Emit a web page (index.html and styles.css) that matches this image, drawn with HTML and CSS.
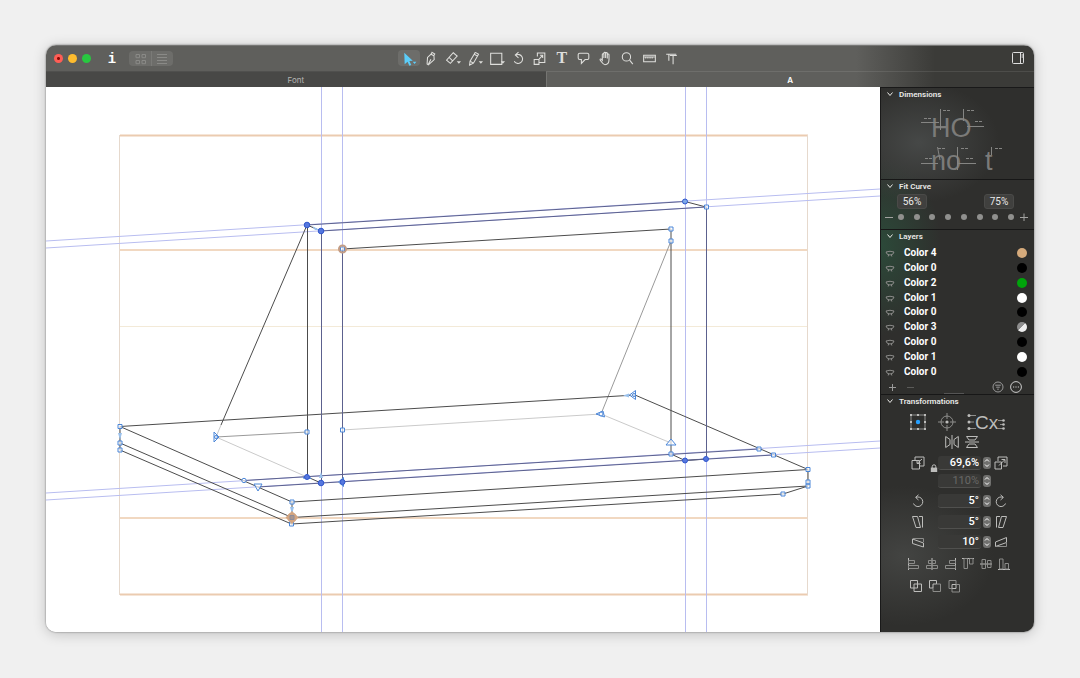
FILE: index.html
```html
<!DOCTYPE html>
<html lang="en">
<head>
<meta charset="utf-8">
<title>Glyph Editor</title>
<link rel="stylesheet" href="styles.css">
</head>
<body>
<svg class="defs" aria-hidden="true">
  <defs>
    <symbol id="eye" viewBox="0 0 10 8"><path d="M1 3Q5 1.500 9 3M1 3Q1.500 6 5 6Q8.500 6 9 3M3.600 6L3.200 7.500M6.400 6L6.800 7.500"/></symbol>
    <symbol id="chev" viewBox="0 0 8 8"><path d="M1.500 2.500L4 5.500L6.500 2.500"/></symbol>
    <symbol id="updown" viewBox="0 0 8 12"><path d="M2 4.500L4 2.500L6 4.500M2 7.500L4 9.500L6 7.500"/></symbol>
    <symbol id="rotate" viewBox="0 0 14 14"><path d="M2.500 9.500A4.800 4.800 0 1 0 5 3.400M7.500 .800L4.600 3.400L7.500 6"/></symbol>
  </defs>
</svg>
<main class="window">
  <header class="titlebar">
    <div class="left">
      <div class="lights"><button class="light red" aria-label="Close"></button><button class="light yellow" aria-label="Minimize"></button><button class="light green" aria-label="Zoom"></button></div>
      <button class="info" aria-label="Info">i</button>
      <div class="views">
        <button aria-label="Grid view"><svg viewBox="0 0 12 12"><path d="M1 1.500h3.500v3.200H1zM7 1.500h3.500v3.200H7zM1 7.500h3.500v3.200H1zM7 7.500h3.500v3.200H7z"/></svg></button>
        <button aria-label="List view"><svg viewBox="0 0 12 12"><path d="M1 1.500h10M1 4.500h10M1 7.500h10M1 10.500h10"/></svg></button>
      </div>
    </div>
    <nav class="tools" aria-label="Tools">
      <button class="active" aria-label="Select"><svg viewBox="1 1 16 16"><path class="fill" d="M5 3.500L13 11L9.800 11.300L11.600 15L9.800 15.800L8.100 12L5.400 14.400zM13 12h3.400l-1.700 2.200z"/></svg></button>
      <button aria-label="Draw"><svg viewBox="1 1 16 16"><path d="M10.500 3.200L13 4.800L12.200 6.200L12.500 10L7 15L5.800 14.200L6.200 8L9.500 5zM9.500 5L12.200 6.400M7 14.400L9.400 9.800"/></svg></button>
      <button aria-label="Erase"><svg viewBox="1 1 16 16"><path d="M9.700 3.600L13.400 6.700L7 13.600L3.400 10.500zM5.800 8L9.400 11.400"/><path class="fill" d="M13 11.500h4l-2 2.400z"/></svg></button>
      <button aria-label="Pencil"><svg viewBox="1 1 16 16"><path d="M9.800 3.200L12.800 5L8 13.400L4.400 15.200L4.800 11.500L9.800 3.200M8.800 5L11.800 6.800M4.800 11.500L8 13.400"/><path class="fill" d="M13 11.500h4l-2 2.400z"/></svg></button>
      <button aria-label="Rectangle"><svg viewBox="1 1 16 16"><path d="M3.500 4h10.500v10.500h-10.500z"/><path class="fill" d="M13 11.500h4l-2 2.400z"/></svg></button>
      <button aria-label="Rotate"><svg viewBox="1 1 16 16"><path d="M5 11.500A4.200 4.200 0 1 0 6.500 5.800M9 3L6 5.800L9 8.400"/></svg></button>
      <button aria-label="Scale"><svg viewBox="1 1 16 16"><path d="M7 7V3.800h7v9H9M4 10h4.500v4.500H4zM8.500 9.500L12 6M9.500 6H12v2.600"/></svg></button>
      <button aria-label="Text" class="serif">T</button>
      <button aria-label="Annotation"><svg viewBox="1 1 16 16"><path d="M5.500 4h7a1.500 1.500 0 0 1 1.500 1.500v3a1.500 1.500 0 0 1-1.500 1.500h-2L7 13.600V10H5.500A1.500 1.500 0 0 1 4 8.500v-3A1.500 1.500 0 0 1 5.500 4z"/></svg></button>
      <button aria-label="Hand"><svg viewBox="1 1 16 16"><path d="M6 10V5.200c0-1 1.500-1 1.500 0V8.500V4c0-1 1.600-1 1.600 0V8.500V4.200c0-1 1.600-1 1.600 0V9V5.500c0-1 1.600-1 1.600 0V10c0 3-1.400 4.800-3.800 4.800C6.500 14.800 6 13 4 10.500C3.500 9.500 4.600 8.900 6 10.600z"/></svg></button>
      <button aria-label="Zoom tool"><svg viewBox="1 1 16 16"><circle cx="8" cy="7.500" r="3.900"/><path d="M11 10.500L14 14.300"/></svg></button>
      <button aria-label="Measure"><svg viewBox="1 1 16 16"><path d="M3.500 6h11v6h-11z"/><path d="M4 7.500h10M5.500 7v2M7.500 7v2M9.500 7v2M11.500 7v2"/></svg></button>
      <button aria-label="Kerning"><svg viewBox="1 1 16 16"><path d="M4 5h5M6.500 5v6M7.500 6.200h6.500M10.500 6.200V14.500M9 5h4.500"/></svg></button>
    </nav>
    <button class="panel-toggle" aria-label="Toggle sidebar"><svg viewBox="0 0 14 14"><rect x="1.500" y="1.500" width="11" height="11" rx="1"/><path d="M9.500 1.500v11M10.500 4h1.500M10.500 6h1.500"/></svg></button>
  </header>
  <nav class="tabs"><button class="tab">Font</button><button class="tab current">A</button></nav>
  <div class="body">
    <section class="canvas" aria-label="Drawing canvas">
      <svg viewBox="46 87 834 545" preserveAspectRatio="xMidYMid slice">
        <g class="metrics"><path class="strong" d="M120 135.500H808M120 594.500H808"/><path class="mid" d="M120 250H808M120 518H808"/><path class="pale" d="M120 326.500H808"/><path class="side" d="M119.500 135V595M807.500 135V595"/></g>
        <path class="guides" d="M321.500 87V632M342.500 87V632M685.500 87V632M706.500 87V632M46 241L880 189M46 248L880 196M46 493L880 441M46 500L880 448"/>
        <path class="faint" d="M221 425L216 437L307 477M342.500 430L601 414L671 443"/>
        <path class="soft" d="M216 437L307 432M671 241L601 414"/>
        <path class="outline" d="M120 426.500L635 395L808 469.500V486L783 494L291.500 524L120 450V426.500L292 502L808 469.500M120 443L292 517.500L808 486M292 502V524M307.500 225V477L321 483M307 225L221 425M342.500 249L671 229V454L685 460.500L706 459M685 201.500L706 207M307 225L321 231"/>
        <path class="navy" d="M307 225L685 201.500M321 231L706 207M321.500 231V483M342.500 249V482M706.500 207V459M244 480.500L759 449M258 487L773 455"/>
        <path class="arrow" d="M118 433h4l-2 7zM290 507h4l-2 7zM623 395.500l6-2v4zM319 478h4l-2-6zM312 226l8 4l-5 0z"/>
        <g class="nodes">
          <path d="M118 424.500h4v4h-4zM118 441h4v4h-4zM118 448h4v4h-4zM290 500h4v4h-4zM289.500 522h4v4h-4zM305 430h4v4h-4zM340.500 428h4v4h-4zM340.500 247h4v4h-4zM669 227h4v4h-4zM669 239h4v4h-4zM669 452h4v4h-4zM704.500 205h4v4h-4zM757 447h4v4h-4zM771.500 453h4v4h-4zM806 467.500h4v4h-4zM806 480h4v4h-4zM806 484h4v4h-4zM781 492h4v4h-4z"/>
          <path d="M214 432v10l5-5zM254 484l8 0l-4 7zM596 414l7-3l1.500 6zM629.500 395l6-4.500v9zM666 445h10l-5-6zM338.500 482l5-4.500v9zM303 478l4-3.500l4 4z"/>
          <circle cx="244" cy="480.500" r="2.200"/><circle cx="216" cy="437" r="1.500"/><circle cx="601" cy="414" r="2"/><circle cx="634" cy="395" r="1.500"/>
        </g>
        <g class="start"><path d="M292 511L298.500 517.500L292 524L285.500 517.500z"/><circle cx="292" cy="517.500" r="4.800"/><circle class="ring" cx="342.500" cy="249" r="3.500"/><path class="core" d="M290 515.500h4v4h-4z"/></g>
        <g class="smooth"><circle cx="307" cy="225" r="2.800"/><circle cx="321" cy="231" r="2.800"/><circle cx="307" cy="477" r="2.500"/><circle cx="321" cy="483" r="2.800"/><circle cx="342.500" cy="482" r="2.500"/><circle class="light-node" cx="685" cy="201.500" r="2.500"/><circle cx="685" cy="460.500" r="2.500"/><circle cx="706" cy="459" r="2.500"/></g>
      </svg>
    </section>
    <aside class="sidebar">
      <section class="dimensions">
        <h2><svg><use href="#chev"/></svg>Dimensions</h2>
        <svg class="specimen" viewBox="0 0 153 78">
          <text x="50" y="37">HO</text><text x="50" y="70">no</text><text x="104" y="70">t</text>
          <path d="M59.500 9V30M40 22.500H58M82.500 9V21M86 26.500H103M56.500 47L59 60M40 63.500H57M76.500 47V70M77 63.500H95M110.500 47V55"/>
          <path class="dash" d="M43 18.500h7M62 10.500h7M86 10.500h7M94 21.500h7M57 48.500h7M44 58.500h7M80 48.500h7M85 58.500h7M114 48.500h7"/>
        </svg>
      </section>
      <section class="fit">
        <h2><svg><use href="#chev"/></svg>Fit Curve</h2>
        <div class="fit-values"><input aria-label="Minimum curve" value="56%"><input aria-label="Maximum curve" value="75%"></div>
        <div class="fit-dots">
          <button aria-label="Decrease"><svg viewBox="0 0 8 8"><path d="M0 4.500h8"/></svg></button>
          <input type="radio" name="fit" aria-label="Step 1"><input type="radio" name="fit" aria-label="Step 2"><input type="radio" name="fit" aria-label="Step 3"><input type="radio" name="fit" aria-label="Step 4"><input type="radio" name="fit" aria-label="Step 5"><input type="radio" name="fit" aria-label="Step 6"><input type="radio" name="fit" aria-label="Step 7"><input type="radio" name="fit" aria-label="Step 8">
          <button aria-label="Increase"><svg viewBox="0 0 8 8"><path d="M0 4.500h8M4 .500v8"/></svg></button>
        </div>
      </section>
      <section class="layers">
        <h2><svg><use href="#chev"/></svg>Layers</h2>
        <ul>
          <li><svg><use href="#eye"/></svg>Color 4<i class="tan"></i></li>
          <li><svg><use href="#eye"/></svg>Color 0<i class="black"></i></li>
          <li><svg><use href="#eye"/></svg>Color 2<i class="lime"></i></li>
          <li><svg><use href="#eye"/></svg>Color 1<i class="white"></i></li>
          <li><svg><use href="#eye"/></svg>Color 0<i class="black"></i></li>
          <li><svg><use href="#eye"/></svg>Color 3<i class="split"></i></li>
          <li><svg><use href="#eye"/></svg>Color 0<i class="black"></i></li>
          <li><svg><use href="#eye"/></svg>Color 1<i class="white"></i></li>
          <li><svg><use href="#eye"/></svg>Color 0<i class="black"></i></li>
        </ul>
        <div class="layer-actions">
          <button aria-label="Add layer"><svg viewBox="0 0 12 12"><path d="M3 6.500h7M6.500 3v7"/></svg></button>
          <button class="dim" aria-label="Remove layer"><svg viewBox="0 0 12 12"><path d="M3 6.500h7"/></svg></button>
          <span class="grip"></span>
          <button aria-label="Filter layers"><svg viewBox="0 0 12 12"><circle cx="6" cy="6" r="5"/><path d="M3.200 4.200h5.600M4.200 6.200h3.600M5.200 8.200h1.600"/></svg></button>
          <button class="bright" aria-label="More"><svg viewBox="0 0 12 12"><circle cx="6" cy="6" r="5.400"/><path d="M3 6h1.200M5.400 6h1.200M7.800 6H9"/></svg></button>
        </div>
      </section>
      <section class="transform">
        <h2><svg><use href="#chev"/></svg>Transformations</h2>
        <div class="origins">
          <button aria-label="Bounding box origin"><svg width="18" height="18" viewBox="0 0 18 18"><path d="M2 2h14v14H2z"/><path class="pts" d="M1 1h2v2H1zM8 1h2v2H8zM15 1h2v2h-2zM1 8h2v2H1zM15 8h2v2h-2zM1 15h2v2H1zM8 15h2v2H8zM15 15h2v2h-2z"/><circle class="center" cx="9" cy="9" r="2.200"/></svg></button>
          <button aria-label="Point origin"><svg width="20" height="20" viewBox="0 0 20 20"><circle cx="10" cy="10" r="6"/><path d="M10 1v6M10 13v6M1 10h6M13 10h6"/><circle class="pts" cx="10" cy="10" r="1.600"/></svg></button>
          <button aria-label="Metrics origin"><svg width="38" height="24" viewBox="0 -2 38 24"><path d="M2 3.500h7M2 10h5M2 16.500h7M31 8.500h6M33 12.500h4M31 16.500h6"/><circle class="pts" cx="2" cy="3.500" r="1.500"/><circle class="pts" cx="2" cy="10" r="1.500"/><circle class="pts" cx="2" cy="16.500" r="1.500"/><circle class="pts" cx="36.500" cy="8.500" r="1.300"/><circle class="pts" cx="36.500" cy="12.500" r="1.300"/><circle class="pts" cx="36.500" cy="16.500" r="1.300"/><text x="8" y="17">Cx</text></svg></button>
        </div>
        <div class="mirrors">
          <button aria-label="Flip horizontally"><svg width="14" height="14" viewBox="0 0 14 14"><path d="M7 0v14M.700 1.500L5 4.500V9.500L.700 12.500zM13.300 1.500L9 4.500V9.500L13.300 12.500z"/></svg></button>
          <button aria-label="Flip vertically"><svg width="14" height="14" viewBox="0 0 14 14"><path d="M0 7h14M1.500 1.500H12.500L10 5H4zM1.500 12.500H12.500L10 9H4z"/></svg></button>
        </div>
        <div class="fields">
          <button aria-label="Scale down"><svg width="14" height="14" viewBox="0 0 14 14"><path d="M4 4V1h9v9H9M1 4.500h7.500V13H1zM11 3L6 7.500M6 4.500v3h3.500"/></svg></button>
          <button class="lock" aria-label="Lock proportions"><svg width="8" height="8" viewBox="0 0 8 8"><path d="M2.200 4V2.600a1.800 1.800 0 0 1 3.600 0V4"/><path class="pts" d="M.800 3.600h6.400v4.400H.800z"/></svg></button>
          <input aria-label="Horizontal scale" value="69,6%"><button class="stepper" aria-label="Step horizontal scale"><svg><use href="#updown"/></svg></button>
          <button aria-label="Scale up"><svg width="14" height="14" viewBox="0 0 14 14"><path d="M4 5V1h9v9H9M1 6h6.500v7H1zM5 9.500L10.500 4M7.500 3.500h3.500v3.500"/></svg></button>
          <input class="third" aria-label="Vertical scale" value="110%" disabled><button class="stepper" aria-label="Step vertical scale"><svg><use href="#updown"/></svg></button>
          <button class="first" aria-label="Rotate left"><svg width="14" height="14"><use href="#rotate"/></svg></button>
          <input class="third" aria-label="Rotation" value="5°"><button class="stepper" aria-label="Step rotation"><svg><use href="#updown"/></svg></button>
          <button aria-label="Rotate right"><svg class="flip" width="14" height="14"><use href="#rotate"/></svg></button>
          <button class="first" aria-label="Slant left"><svg width="14" height="14" viewBox="0 0 14 14"><path d="M1.500 1.500h5l3 11H5zM8 1.500h3.500v11"/></svg></button>
          <input class="third" aria-label="Slant" value="5°"><button class="stepper" aria-label="Step slant"><svg><use href="#updown"/></svg></button>
          <button aria-label="Slant right"><svg class="flip" width="14" height="14" viewBox="0 0 14 14"><path d="M1.500 1.500h5l3 11H5zM8 1.500h3.500v11"/></svg></button>
          <button class="first" aria-label="Skew down"><svg width="14" height="14" viewBox="0 0 14 14"><path d="M1.500 4L12.500 8v4L1.500 8.500z"/><path class="thin" d="M2 3.500h10.500V7"/></svg></button>
          <input class="third" aria-label="Skew" value="10°"><button class="stepper" aria-label="Step skew"><svg><use href="#updown"/></svg></button>
          <button aria-label="Skew up"><svg width="14" height="14" viewBox="0 0 14 14"><path d="M1.500 7L12.500 2.500v5L1.500 11.500z"/><path class="thin" d="M1.500 11.500h11V7"/></svg></button>
        </div>
        <div class="align">
          <button aria-label="Align left"><svg viewBox="0 0 14 14"><path d="M1.500 1v12"/><path class="thin" d="M1.500 3.500h6v3h-6zM1.500 8.500h10v3h-10z"/></svg></button>
          <button aria-label="Align center"><svg viewBox="0 0 14 14"><path d="M7 1v12"/><path class="thin" d="M3.500 3.500h7v3h-7zM1.500 8.500h11v3h-11z"/></svg></button>
          <button aria-label="Align right"><svg viewBox="0 0 14 14"><path d="M12.500 1v12"/><path class="thin" d="M6.500 3.500h6v3h-6zM2.500 8.500h10v3h-10z"/></svg></button>
          <button aria-label="Align top"><svg viewBox="0 0 14 14"><path d="M1 1.500h12"/><path class="thin" d="M3 1.500h3.500v10H3zM8.500 1.500h3.500v5.500H8.500z"/></svg></button>
          <button aria-label="Align middle"><svg viewBox="0 0 14 14"><path d="M1 7h12"/><path class="thin" d="M3 2.500h3.500v9H3zM8.500 3.500h3.500v7H8.500z"/></svg></button>
          <button aria-label="Align bottom"><svg viewBox="0 0 14 14"><path d="M1 12.500h12"/><path class="thin" d="M2.500 2h3.500v10H2.500zM8 6.500h3.500V12H8z"/></svg></button>
        </div>
        <div class="boolean">
          <button aria-label="Union"><svg viewBox="0 0 14 14"><path d="M1.500 1.500h7v3.500h4v7.500h-7.500V9H1.500z"/><path d="M5 9V5h3.500v4z"/></svg></button>
          <button aria-label="Subtract"><svg viewBox="0 0 14 14"><path d="M1.500 1.500h7v3.500H5v4H1.500z"/><path class="thin" d="M8.500 5h4v7.500h-7.500V9"/></svg></button>
          <button aria-label="Intersect"><svg viewBox="0 0 14 14"><path d="M5 5.500h4v4H5z"/><path class="thin" d="M5 9.500H2v-8h7v4h3.500v7.500h-7.500V9.500"/></svg></button>
        </div>
      </section>
    </aside>
  </div>
</main>
</body>
</html>
```

FILE: styles.css
```css
* { box-sizing: border-box; }
body {
  margin: 0;
  min-height: 100vh;
  display: grid;
  padding: 45px 46px 46px;
  background: #f0f0f0;
  font-family: Inter, "Liberation Sans", sans-serif;
  color: #e9e9e7;
}
button, input { font: inherit; color: inherit; border: 0; padding: 0; margin: 0; background: none; min-width: 0; }
button { display: grid; place-items: center; }
svg { display: block; fill: none; stroke: currentColor; }
.defs { position: absolute; width: 0; height: 0; }

.window {
  display: flex;
  flex-direction: column;
  border-radius: 10px;
  overflow: hidden;
  background: #fff;
  box-shadow: 0 0 2px #0008, 0 2px 14px #0003;
}

.titlebar {
  display: grid;
  grid-template-columns: 1fr 284px 1fr;
  align-items: center;
  height: 26px;
  border-top: 1px solid #777775;
  background: linear-gradient(90deg, #5f5f5c 82%, #3b3b38 90%);
}
.left { display: flex; align-items: center; padding-left: 8px; }
.lights { display: flex; gap: 5px; }
.light { width: 9px; height: 9px; border-radius: 50%; }
.red { background: radial-gradient(#8d0904 0 1px, #ff5d55 2px); }
.yellow { background: #febc2e; }
.green { background: #28c840; }
.info { margin: 0 12px 0 16px; width: 10px; font: bold 14px/18px "Liberation Mono", monospace; color: #fff; }
.views { display: flex; padding: 0 1px; background: #6d6d6a; border-radius: 4px; color: #8a8a87; }
.views button { width: 21px; height: 15px; }
.views button + button { border-left: 1px solid #7a7a77; }
.views svg { width: 12px; height: 12px; }
.tools { display: flex; margin-bottom: 1px; color: #dededb; }
.tools button { flex: 1; height: 16px; border-radius: 4px; }
.tools svg { width: 17px; height: 17px; overflow: visible; }
.tools .active { background: #6d6d6a; color: #5ccdf9; }
.tools .serif { font: bold 16px/16px "Liberation Serif", serif; }
.fill { fill: currentColor; stroke: none; }
.panel-toggle { justify-self: end; margin: 0 9px 1px 0; color: #ddd; }
.panel-toggle svg { width: 14px; height: 14px; }

.tabs { display: flex; height: 16px; background: linear-gradient(90deg, #5f5f5c 82%, #3b3b38 90%); font-size: 8px; }
.tab { flex: 500 1 0; height: 16px; color: #b5b5b2; background: #484846; border-top: 1px solid #50504e; }
.tab.current { flex-grow: 488; color: #fff; font-weight: 600; background: none; border-left: 1px solid #757572; border-top-color: #ffffff18; }

.body { flex: 1; display: flex; min-height: 0; }
.canvas { flex: 1; min-width: 0; background: #fff; overflow: hidden; display: grid; }
.canvas > svg { width: 100%; height: 100%; min-height: 0; }
.metrics .strong { stroke: #ebcbb0; stroke-width: 2; }
.metrics .mid { stroke: #f1d8c1; stroke-width: 2; }
.metrics .pale { stroke: #f3ead8; }
.metrics .side { stroke: #e6d9cd; }
.guides { stroke: #b8bdf0; }
.faint { stroke: #cacaca; }
.soft { stroke: #999; }
.outline { stroke: #4c4c4c; }
.navy { stroke: #5c618e; }
.start { fill: #d3a581; stroke: none; }
.start .ring { fill: none; stroke: #c39d86; stroke-width: 2; }
.start .core { fill: #a9958d; stroke: #8d8c9b; }
.arrow { fill: #9ac1ec; stroke: none; }
.nodes { stroke: #4b86d8; fill: #ffffffb0; }
.smooth { stroke: #3157cc; fill: #5577df; }
.smooth .light-node { fill: #7da8e8; }

.sidebar {
  flex: 0 0 154px;
  border-left: 1px solid #191919;
  border-top: 1px solid #191919;
  font-family: Roboto, sans-serif;
  background:
    radial-gradient(ellipse 80px 60px at 25% 10%, #464847, #46484700),
    radial-gradient(ellipse 60px 90px at 0 29%, #2c4939, #2c493900),
    radial-gradient(ellipse 90px 70px at 15% 86%, #434442, #43444200),
    #2f2f2d;
}
.sidebar section { border-bottom: 1px solid #171717; }
.sidebar .transform { border: 0; }
h2 { display: flex; align-items: center; gap: 5px; margin: 0; padding: 0 5px; height: 12px; font-size: 8px; font-weight: 600; }
h2 svg { width: 8px; height: 8px; }
.specimen { width: 100%; color: #858583; overflow: visible; }
.specimen text { font: 27px "Liberation Sans", sans-serif; fill: #7b7b79; stroke: none; }
.dash { stroke-dasharray: 3 1; }

.dimensions { height: 92px; }
.fit { height: 50px; }
.fit-values { display: flex; justify-content: space-between; padding: 2px 20px 0 16px; font-size: 10px; }
.fit-values input { width: 30px; height: 15px; text-align: center; background: #40403e; border-radius: 3px; border: 1px solid #4a4a48; }
.fit-dots { display: grid; grid-template-columns: 9px repeat(8, 1fr) 9px; place-items: center; padding: 0 6px 0 3px; height: 16px; color: #a3a3a1; }
.fit-dots svg { width: 8px; height: 8px; }
.fit-dots input { appearance: none; width: 6px; height: 6px; border-radius: 50%; background: #90908e; }

.layers { height: 165px; }
.layers ul { display: grid; grid-template-rows: repeat(9, 1fr); height: 133px; margin: 4px 0 0; padding: 0 7px 0 4px; list-style: none; font-size: 10px; font-weight: 700; color: #fff; }
.layers li { display: flex; align-items: center; gap: 9px; line-height: 12px; }
.layers li svg { width: 10px; height: 8px; color: #8b8b89; }
.layers i { width: 10px; height: 10px; margin-left: auto; border-radius: 50%; }
.tan { background: #d5aa7b; }
.black { background: #000; }
.lime { background: #00a40b; }
.white { background: #fff; }
.split { background: linear-gradient(135deg, #8d8d8d 50%, #eee 50%); }
.layer-actions { display: flex; align-items: center; gap: 6px; height: 15px; padding: 0 12px 0 5px; color: #999; }
.layer-actions svg { width: 12px; height: 12px; }
.layer-actions .dim { color: #5b5b59; }
.layer-actions .bright { color: #ccc; }
.grip { flex: 1; }
.grip::after { content: ""; display: block; width: 20px; height: 1px; margin: 14px auto 0; background: #555; }

.transform { color: #bdbdbb; }
.transform h2 { color: #e9e9e7; }
.pts { fill: currentColor; stroke: none; }
.center { fill: #26a0ff; stroke: none; }
.origins { display: flex; align-items: center; gap: 10px; height: 25px; padding: 5px 0 0 28px; }
.origins svg { stroke: #8e8e8c; overflow: visible; }
.origins text { font: 19px "Liberation Sans", sans-serif; fill: #bdbdbb; stroke: none; }
.mirrors { display: flex; gap: 6px; padding: 3px 0 5px 64px; }
.fields { display: grid; grid-template-columns: 24px 8px 43px 12px 16px; grid-template-rows: 18px 18px 21px 21px 20px; align-items: center; padding-left: 25px; }
.fields .first { grid-column: 1; }
.fields .third { grid-column: 3; }
.fields .lock { align-self: end; justify-self: start; }
.fields input { width: 43px; height: 14px; padding-right: 2px; text-align: right; font-size: 11px; font-weight: 500; color: #fff; background: #393937; border-radius: 3px; border-bottom: 1px solid #50504e; }
.fields input:disabled { color: #686866; font-weight: 400; }
.stepper { justify-self: center; width: 8px; height: 12px; border-radius: 3px; background: #70706e; color: #fff; }
.stepper svg { width: 8px; height: 12px; }
.flip { transform: scaleX(-1); }
.align, .boolean { display: flex; gap: 4px; padding: 5px 0 0 26px; }
.align svg, .boolean svg { width: 14px; height: 14px; }
.boolean { gap: 5px; padding: 8px 0 0 28px; }
.thin { stroke: #8c8c8a; }
```
